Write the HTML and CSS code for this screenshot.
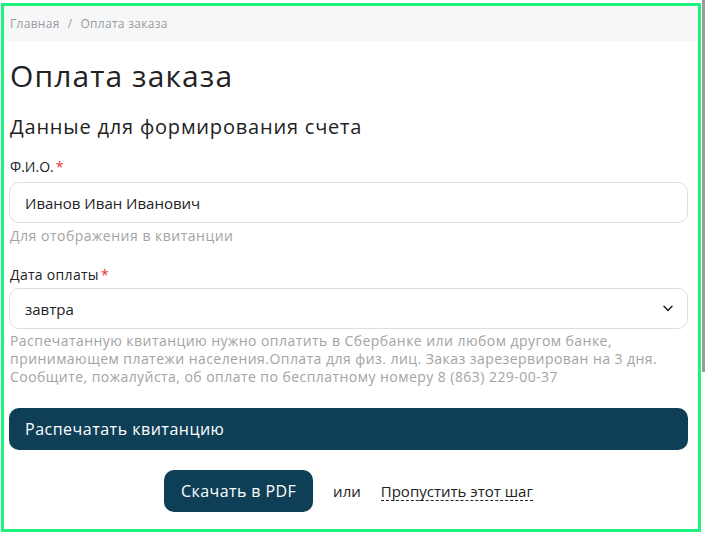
FILE: index.html
```html
<!DOCTYPE html>
<html lang="ru">
<head>
<meta charset="utf-8">
<title>Оплата заказа</title>
<link rel="stylesheet" href="styles.css">
</head>
<body>
<div class="frame">
  <nav class="crumbs">
    <a class="crumb" href="#">Главная</a>
    <span class="sep">/</span>
    <span class="crumb">Оплата заказа</span>
  </nav>
  <main class="content">
    <h1 class="title">Оплата заказа</h1>
    <h2 class="subtitle">Данные для формирования счета</h2>

    <div class="field">
      <label class="label">Ф.И.О.<span class="req">*</span></label>
      <div class="input">Иванов Иван Иванович</div>
      <div class="hint">Для отображения в квитанции</div>
    </div>

    <div class="field">
      <label class="label label-date">Дата оплаты<span class="req">*</span></label>
      <div class="input select">
        <span>завтра</span>
        <svg class="chev" width="10" height="7" viewBox="0 0 10 7"><path d="M1 1.2 L5 5.4 L9 1.2" fill="none" stroke="#222" stroke-width="1.5" stroke-linecap="round" stroke-linejoin="round"/></svg>
      </div>
      <p class="note">Распечатанную квитанцию нужно оплатить в Сбербанке или любом другом банке,<br>принимающем платежи населения.Оплата для физ. лиц. Заказ зарезервирован на 3 дня.<br>Сообщите, пожалуйста, об оплате по бесплатному номеру 8 (863) 229-00-37</p>
    </div>

    <button class="btn btn-wide">Распечатать квитанцию</button>

    <div class="actions">
      <button class="btn btn-pdf">Скачать в PDF</button>
      <span class="or">или</span>
      <a class="skip" href="#">Пропустить этот шаг</a>
    </div>
  </main>
</div>
<div class="scrollthumb"></div>
</body>
</html>
```

FILE: styles.css
```css
* { box-sizing: border-box; }
html, body { margin: 0; padding: 0; background: #fff; }
body {
  font-family: "Open Sans", "Noto Sans", sans-serif;
  color: #222;
  height: 534px;
  overflow: hidden;
}
.frame {
  margin: 3px 0 0 1px;
  width: 700px;
  height: 529px;
  border: 3px solid #1cf37f;
}
.crumbs {
  height: 35px;
  background: #f6f7f9;
  display: flex;
  align-items: center;
  padding-left: 6px;
  font-size: 12px;
  letter-spacing: 0.3px;
  color: #9a9a9a;
  gap: 8px;
}
.crumb { color: #9a9a9a; text-decoration: none; }
.content {
  padding: 0 10px 0 5px;
}
.title {
  margin: 17px 0 0 1px;
  font-size: 30px;
  font-weight: 400;
  line-height: 36px;
  letter-spacing: 1.1px;
}
.subtitle {
  margin: 20px 0 0 1px;
  font-size: 20px;
  font-weight: 400;
  line-height: 26px;
  letter-spacing: 0.8px;
}
.field { display: flex; flex-direction: column; }
.label {
  margin: 17px 0 0 1px;
  font-size: 14px;
  line-height: 20px;
}
.label-date { margin-top: 20px; letter-spacing: 0.3px; }
.req { color: #e5322d; margin-left: 2px; }
.input {
  margin-top: 5px;
  height: 41px;
  border: 1px solid #dedede;
  border-radius: 10px;
  display: flex;
  align-items: center;
  padding: 0 14px 0 15px;
  font-size: 15px;
}
.select { justify-content: space-between; margin-top: 3px; }
.hint {
  margin: 4px 0 0 1px;
  font-size: 14px;
  line-height: 18px;
  letter-spacing: 0.5px;
  color: #a3a3a3;
}
.note {
  margin: 3px 0 0 1px;
  font-size: 14px;
  line-height: 18px;
  letter-spacing: 0.45px;
  white-space: nowrap;
  color: #a3a3a3;
}
.btn {
  font-family: inherit;
  border: 0;
  background: #0e3f57;
  color: #fff;
  border-radius: 10px;
  height: 42px;
  font-size: 16px;
  cursor: pointer;
}
.btn-wide {
  display: block;
  width: 100%;
  margin-top: 22px;
  text-align: left;
  padding: 0 16px;
  letter-spacing: 0.5px;
}
.actions {
  margin-top: 20px;
  display: flex;
  align-items: center;
  justify-content: center;
  font-size: 15px;
}
.btn-pdf { padding: 0 16px; width: 149px; letter-spacing: 0.4px; }
.or { margin: 0 20px; }
.skip {
  color: #222;
  text-decoration: none;
  border-bottom: 1px dashed #222;
  line-height: 18px;
}
.scrollthumb {
  position: absolute;
  top: 0;
  right: 0;
  width: 3px;
  height: 372px;
  background: #9c9c9c;
}
```
